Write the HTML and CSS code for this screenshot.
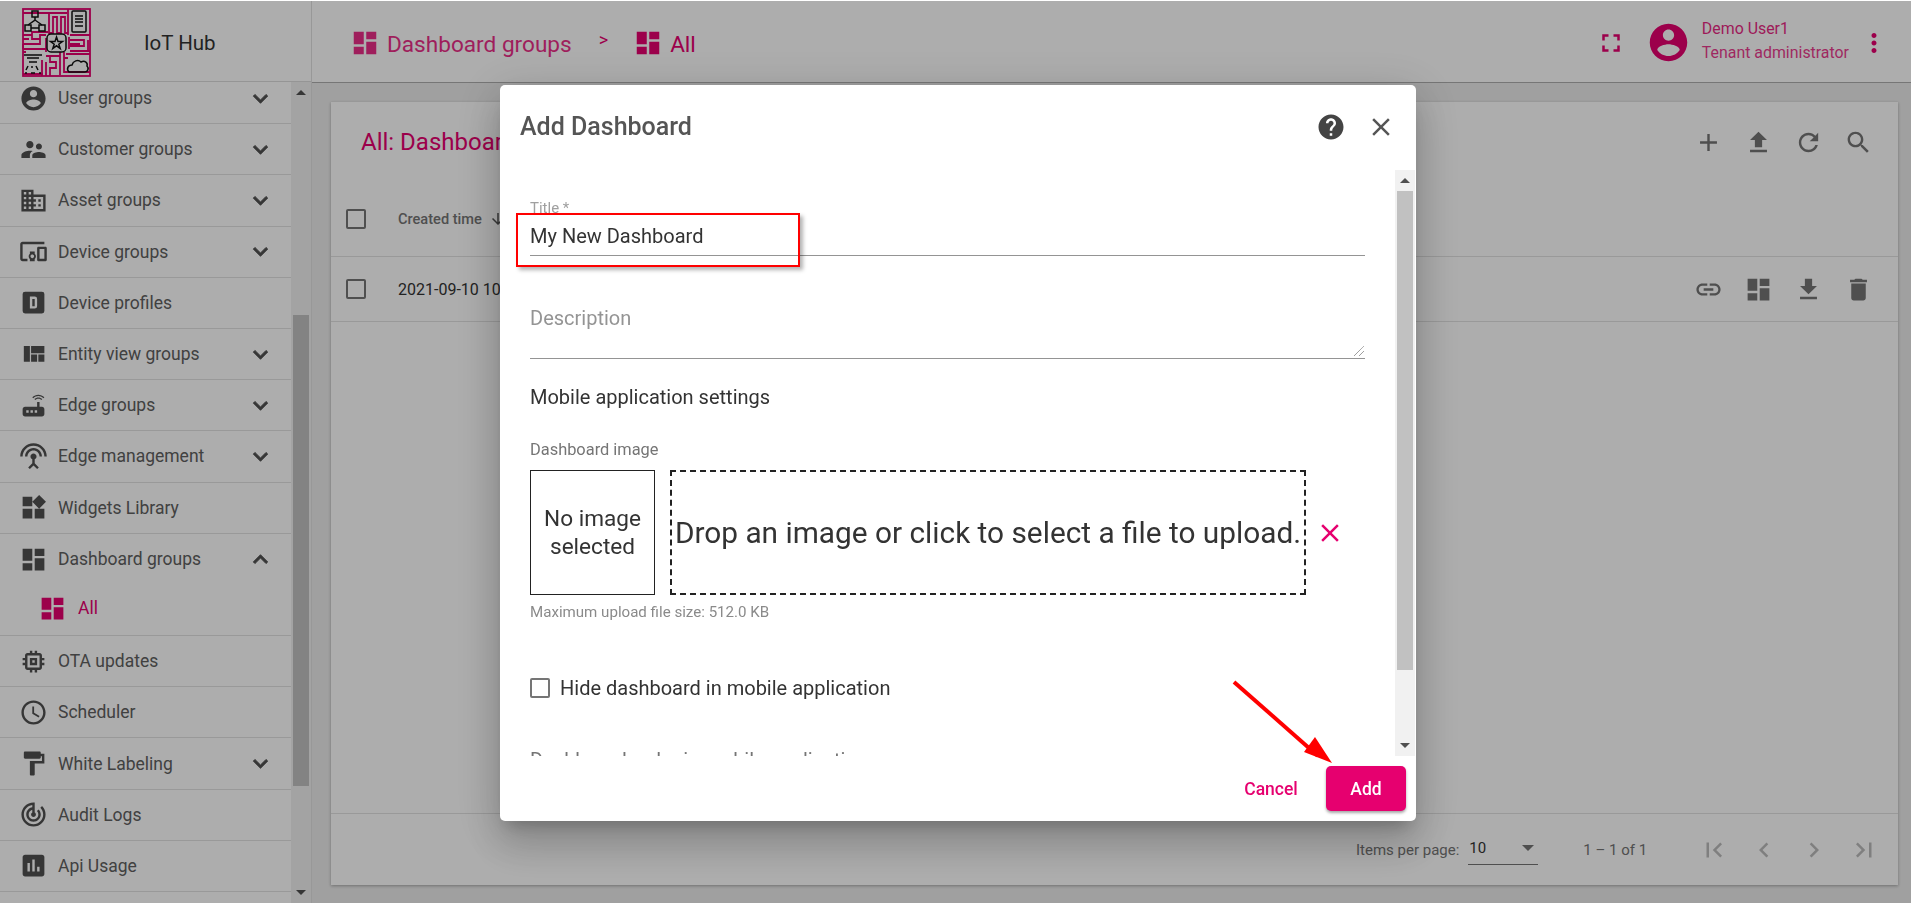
FILE: index.html
```html
<!DOCTYPE html>
<html lang="en">
<head>
    <meta charset="UTF-8">
    <title>IoT Hub - Add Dashboard</title>
    <link rel="stylesheet" href="styles.css">
</head>
<body>

<svg class="sprite" xmlns="http://www.w3.org/2000/svg">
    <symbol id="i-user" viewBox="0 0 24 24"><path d="M12 2C6.48 2 2 6.48 2 12s4.48 10 10 10 10-4.48 10-10S17.52 2 12 2zm0 3c1.66 0 3 1.34 3 3s-1.34 3-3 3-3-1.34-3-3 1.34-3 3-3zm0 14.2c-2.5 0-4.71-1.28-6-3.22.03-1.99 4-3.08 6-3.08 1.99 0 5.97 1.09 6 3.08-1.29 1.94-3.5 3.22-6 3.22z"/></symbol>
    <symbol id="i-customers" viewBox="0 0 24 24"><path d="M16.5 12c1.38 0 2.49-1.12 2.49-2.5S17.88 7 16.5 7C15.12 7 14 8.12 14 9.5s1.12 2.5 2.5 2.5zM9 11c1.66 0 2.99-1.34 2.99-3S10.66 5 9 5C7.34 5 6 6.34 6 8s1.34 3 3 3zm7.5 3c-1.83 0-5.5.92-5.5 2.75V19h11v-2.25c0-1.83-3.67-2.75-5.5-2.75zM9 13c-2.33 0-7 1.17-7 3.5V19h7v-2.25c0-.85.33-2.34 2.37-3.47C10.5 13.1 9.66 13 9 13z"/></symbol>
    <symbol id="i-domain" viewBox="0 0 24 24"><path d="M12 7V3H2v18h20V7H12zM6 19H4v-2h2v2zm0-4H4v-2h2v2zm0-4H4V9h2v2zm0-4H4V5h2v2zm4 12H8v-2h2v2zm0-4H8v-2h2v2zm0-4H8V9h2v2zm0-4H8V5h2v2zm10 12h-8v-2h2v-2h-2v-2h2v-2h-2V9h8v10zm-2-8h-2v2h2v-2zm0 4h-2v2h2v-2z"/></symbol>
    <symbol id="i-devices" viewBox="0 0 24 24"><path d="M3 6h18V4H3c-1.1 0-2 .9-2 2v12c0 1.1.9 2 2 2h4v-2H3V6zm10 6H9v1.78c-.61.55-1 1.33-1 2.22s.39 1.67 1 2.22V20h4v-1.78c.61-.55 1-1.34 1-2.22s-.39-1.67-1-2.22V12zm-2 5.5c-.83 0-1.5-.67-1.5-1.5s.67-1.5 1.5-1.5 1.5.67 1.5 1.5-.67 1.5-1.5 1.5zM22 8h-6c-.5 0-1 .5-1 1v10c0 .5.5 1 1 1h6c.5 0 1-.5 1-1V9c0-.5-.5-1-1-1zm-1 10h-4v-8h4v8z"/></symbol>
    <symbol id="i-profile" viewBox="0 0 24 24"><path fill-rule="evenodd" d="M9 7V17H13A2 2 0 0 0 15 15V9A2 2 0 0 0 13 7H9M5 3H19A2 2 0 0 1 21 5V19A2 2 0 0 1 19 21H5A2 2 0 0 1 3 19V5A2 2 0 0 1 5 3M11 9H13V15H11V9Z"/></symbol>
    <symbol id="i-quilt" viewBox="0 0 24 24"><path d="M10 18h5v-6h-5v6zm-6 0h5V5H4v13zm12 0h5v-6h-5v6zM10 5v6h11V5H10z"/></symbol>
    <symbol id="i-router" viewBox="0 0 24 24"><path d="M20.2 5.9l.8-.8C19.6 3.7 17.8 3 16 3s-3.6.7-5 2.1l.8.8C13 4.8 14.5 4.2 16 4.2s3 .6 4.2 1.7zm-.9.8c-.9-.9-2.1-1.4-3.3-1.4s-2.4.5-3.3 1.4l.8.8c.7-.7 1.6-1 2.5-1 .9 0 1.8.3 2.5 1l.8-.8zM19 13h-2V9h-2v4H5c-1.1 0-2 .9-2 2v4c0 1.1.9 2 2 2h14c1.1 0 2-.9 2-2v-4c0-1.1-.9-2-2-2zM8 18H6v-2h2v2zm3.5 0h-2v-2h2v2zm3.5 0h-2v-2h2v2z"/></symbol>
    <symbol id="i-antenna" viewBox="0 0 24 24"><path d="M12 5c-3.87 0-7 3.13-7 7h2c0-2.76 2.24-5 5-5s5 2.24 5 5h2c0-3.87-3.13-7-7-7zm1 9.29c.88-.39 1.5-1.26 1.5-2.29 0-1.38-1.12-2.5-2.5-2.5S9.5 10.62 9.5 12c0 1.02.62 1.9 1.5 2.29v3.3L7.59 21 9 22.41l3-3 3 3L16.41 21 13 17.59v-3.3zM12 1C5.93 1 1 5.93 1 12h2c0-4.97 4.03-9 9-9s9 4.03 9 9h2c0-6.07-4.93-11-11-11z"/></symbol>
    <symbol id="i-widgets" viewBox="0 0 24 24"><path d="M13 13v8h8v-8h-8zM3 21h8v-8H3v8zM3 3v8h8V3H3zm13.66-1.31L11 7.34 16.66 13l5.66-5.66-5.66-5.65z"/></symbol>
    <symbol id="i-dashboard" viewBox="0 0 24 24"><path d="M3 13h8V3H3v10zm0 8h8v-6H3v6zm10 0h8V11h-8v10zm0-18v6h8V3h-8z"/></symbol>
    <symbol id="i-memory" viewBox="0 0 24 24"><path d="M15 9H9v6h6V9zm-2 4h-2v-2h2v2zm8-2V9h-2V7c0-1.1-.9-2-2-2h-2V3h-2v2h-2V3H9v2H7c-1.1 0-2 .9-2 2v2H3v2h2v2H3v2h2v2c0 1.1.9 2 2 2h2v2h2v-2h2v2h2v-2h2c1.1 0 2-.9 2-2v-2h2v-2h-2v-2h2zm-4 6H7V7h10v10z"/></symbol>
    <symbol id="i-schedule" viewBox="0 0 24 24"><path d="M11.99 2C6.47 2 2 6.48 2 12s4.47 10 9.99 10C17.52 22 22 17.52 22 12S17.52 2 11.99 2zM12 20c-4.42 0-8-3.58-8-8s3.58-8 8-8 8 3.58 8 8-3.58 8-8 8zm.5-13H11v6l5.25 3.15.75-1.23-4.5-2.67z"/></symbol>
    <symbol id="i-paint" viewBox="0 0 24 24"><path d="M18 4V3c0-.55-.45-1-1-1H5c-.55 0-1 .45-1 1v4c0 .55.45 1 1 1h12c.55 0 1-.45 1-1V6h1v4H9v11c0 .55.45 1 1 1h2c.55 0 1-.45 1-1v-9h8V4h-3z"/></symbol>
    <symbol id="i-track" viewBox="0 0 24 24"><path d="M19.07 4.93l-1.41 1.41C19.1 7.79 20 9.79 20 12c0 4.42-3.58 8-8 8s-8-3.58-8-8c0-4.08 3.05-7.44 7-7.93v2.02C8.16 6.57 6 9.03 6 12c0 3.31 2.69 6 6 6s6-2.69 6-6c0-1.66-.67-3.16-1.76-4.24l-1.41 1.41C15.55 9.9 16 10.9 16 12c0 2.21-1.79 4-4 4s-4-1.79-4-4c0-1.86 1.28-3.41 3-3.86v2.14c-.6.35-1 .98-1 1.72 0 1.1.9 2 2 2s2-.9 2-2c0-.74-.4-1.38-1-1.72V2h-1C6.48 2 2 6.48 2 12s4.48 10 10 10 10-4.48 10-10c0-2.76-1.12-5.26-2.93-7.07z"/></symbol>
    <symbol id="i-chart" viewBox="0 0 24 24"><path d="M19 3H5c-1.1 0-2 .9-2 2v14c0 1.1.9 2 2 2h14c1.1 0 2-.9 2-2V5c0-1.1-.9-2-2-2zM9 17H7v-7h2v7zm4 0h-2V7h2v10zm4 0h-2v-4h2v4z"/></symbol>
    <symbol id="i-more" viewBox="0 0 24 24"><path d="M16.59 8.59L12 13.17 7.41 8.59 6 10l6 6 6-6z" stroke="currentColor" stroke-width=".7"/></symbol>
    <symbol id="i-less" viewBox="0 0 24 24"><path d="M12 8l-6 6 1.41 1.41L12 10.83l4.59 4.58L18 14z" stroke="currentColor" stroke-width=".7"/></symbol>
    <symbol id="i-fullscreen" viewBox="0 0 24 24"><path d="M7 14H5v5h5v-2H7v-3zm-2-4h2V7h3V5H5v5zm12 7h-3v2h5v-5h-2v3zM14 5v2h3v3h2V5h-5z"/></symbol>
    <symbol id="i-vert" viewBox="0 0 24 24"><path d="M12 8c1.1 0 2-.9 2-2s-.9-2-2-2-2 .9-2 2 .9 2 2 2zm0 2c-1.1 0-2 .9-2 2s.9 2 2 2 2-.9 2-2-.9-2-2-2zm0 6c-1.1 0-2 .9-2 2s.9 2 2 2 2-.9 2-2-.9-2-2-2z"/></symbol>
    <symbol id="i-help" viewBox="0 0 24 24"><path d="M12 2C6.48 2 2 6.48 2 12s4.48 10 10 10 10-4.48 10-10S17.52 2 12 2zm1 17h-2v-2h2v2zm2.07-7.75l-.9.92C13.45 12.9 13 13.5 13 15h-2v-.5c0-1.1.45-2.1 1.17-2.83l1.24-1.26c.37-.36.59-.86.59-1.41 0-1.1-.9-2-2-2s-2 .9-2 2H8c0-2.21 1.79-4 4-4s4 1.79 4 4c0 .88-.36 1.68-.93 2.25z"/></symbol>
    <symbol id="i-close" viewBox="0 0 24 24"><path d="M19 6.41L17.59 5 12 10.59 6.41 5 5 6.41 10.59 12 5 17.59 6.41 19 12 13.41 17.59 19 19 17.59 13.41 12z"/></symbol>
    <symbol id="i-add" viewBox="0 0 24 24"><path d="M19 13h-6v6h-2v-6H5v-2h6V5h2v6h6v2z"/></symbol>
    <symbol id="i-upload" viewBox="0 0 24 24"><path d="M9 16h6v-6h4l-7-7-7 7h4zm-4 2h14v2H5z"/></symbol>
    <symbol id="i-download" viewBox="0 0 24 24"><path d="M19 9h-4V3H9v6H5l7 7 7-7zM5 18v2h14v-2H5z"/></symbol>
    <symbol id="i-refresh" viewBox="0 0 24 24"><path d="M17.65 6.35C16.2 4.9 14.21 4 12 4c-4.42 0-7.99 3.58-7.99 8s3.57 8 7.99 8c3.73 0 6.84-2.55 7.73-6h-2.08c-.82 2.33-3.04 4-5.65 4-3.31 0-6-2.69-6-6s2.69-6 6-6c1.66 0 3.14.69 4.22 1.78L13 11h7V4l-2.35 2.35z"/></symbol>
    <symbol id="i-search" viewBox="0 0 24 24"><path d="M15.5 14h-.79l-.28-.27C15.41 12.59 16 11.11 16 9.5 16 5.91 13.09 3 9.5 3S3 5.91 3 9.5 5.91 16 9.5 16c1.61 0 3.09-.59 4.23-1.57l.27.28v.79l5 4.99L20.49 19l-4.99-5zm-6 0C7.01 14 5 11.99 5 9.5S7.01 5 9.5 5 14 7.01 14 9.5 11.99 14 9.5 14z"/></symbol>
    <symbol id="i-link" viewBox="0 0 24 24"><path d="M3.9 12c0-1.71 1.39-3.1 3.1-3.1h4V7H7c-2.76 0-5 2.24-5 5s2.24 5 5 5h4v-1.9H7c-1.71 0-3.1-1.39-3.1-3.1zM8 13h8v-2H8v2zm9-6h-4v1.9h4c1.71 0 3.1 1.39 3.1 3.1s-1.39 3.1-3.1 3.1h-4V17h4c2.76 0 5-2.24 5-5s-2.24-5-5-5z"/></symbol>
    <symbol id="i-delete" viewBox="0 0 24 24"><path d="M6 19c0 1.1.9 2 2 2h8c1.1 0 2-.9 2-2V7H6v12zM19 4h-3.5l-1-1h-5l-1 1H5v2h14V4z"/></symbol>
    <symbol id="i-first" viewBox="0 0 24 24"><path d="M18.41 16.59L13.82 12l4.59-4.59L17 6l-6 6 6 6zM6 6h2v12H6z"/></symbol>
    <symbol id="i-prev" viewBox="0 0 24 24"><path d="M15.41 7.41L14 6l-6 6 6 6 1.41-1.41L10.83 12z"/></symbol>
    <symbol id="i-next" viewBox="0 0 24 24"><path d="M10 6L8.59 7.41 13.17 12l-4.58 4.59L10 18l6-6z"/></symbol>
    <symbol id="i-last" viewBox="0 0 24 24"><path d="M5.59 7.41L10.18 12l-4.59 4.59L7 18l6-6-6-6zM16 6h2v12h-2z"/></symbol>
    <symbol id="i-down" viewBox="0 0 24 24"><path d="M20 12l-1.41-1.41L13 16.17V4h-2v12.17l-5.58-5.59L4 12l8 8 8-8z"/></symbol>
</svg>

<div class="app">
    <aside class="sidebar">
        <div class="brand">
            <svg class="logo" viewBox="0 0 69 69">
                <rect width="69" height="69" fill="#fff"/>
                <g fill="none" stroke="#e6006f" stroke-width="1.8">
                    <rect x="1" y="1" width="67" height="67"/>
                    <path d="M1 5h44M27 5v20h4V9h4v16h4V9h4v16h3M46 1v26M1 27h9v4h8v5H1M1 31h6M24 27h-6v9M1 41h23v3M1 36v5M24 30v14M10 27v-3h16"/>
                    <path d="M48 27h20M48 32h14v6H48M48 36h10M48 43h20M66 32v11M44 46h24M24 48h14v19M28 48v6h6v6h-6v8M42 50h4M42 46v18h5M20 52v16M24 54v14M46 64h22M1 44h3M1 66h20M47 29v12M38 44v4M42 44v2"/>
                </g>
                <g fill="none" stroke="#111" stroke-width="1.500">
                    <rect x="10" y="3" width="6" height="6"/><rect x="3" y="17" width="6" height="6"/><rect x="17" y="17" width="6" height="6"/>
                    <path d="M13 9v3l-7 5M13 12l7 5M9 20h8"/>
                    <rect x="50" y="3" width="14" height="21" rx="1"/>
                    <path d="M53 8h8M53 11h8M53 14h8M53 18h8"/>
                    <rect x="25" y="26" width="19" height="18" rx="4"/>
                    <path d="M34.500 29l1.500 4.500h4.500l-3.700 2.700 1.400 4.300-3.700-2.700-3.700 2.700 1.400-4.300-3.700-2.700h4.500z"/>
                    <path d="M47 64c-3-3-1-7 3-7 1-4 6-6 9-3 4-2 7 1 6 4 2 2 1 6-2 6z"/>
                    <path d="M2 47h18M5 50h12M7 54h8M10 58v2M6 58l-2 4M14 58l2 4M3 65h2M9 65h4M17 65h2" />
                </g>
            </svg>
            <div class="brand-name">IoT Hub</div>
        </div>
        <div class="side-scroll">
            <nav class="nav-list">
                <div class="nav-item"><svg class="ico"><use href="#i-user"/></svg><span class="nav-label">User groups</span><svg class="chev"><use href="#i-more"/></svg></div>
                <div class="nav-item"><svg class="ico"><use href="#i-customers"/></svg><span class="nav-label">Customer groups</span><svg class="chev"><use href="#i-more"/></svg></div>
                <div class="nav-item"><svg class="ico"><use href="#i-domain"/></svg><span class="nav-label">Asset groups</span><svg class="chev"><use href="#i-more"/></svg></div>
                <div class="nav-item"><svg class="ico"><use href="#i-devices"/></svg><span class="nav-label">Device groups</span><svg class="chev"><use href="#i-more"/></svg></div>
                <div class="nav-item"><svg class="ico"><use href="#i-profile"/></svg><span class="nav-label">Device profiles</span></div>
                <div class="nav-item"><svg class="ico"><use href="#i-quilt"/></svg><span class="nav-label">Entity view groups</span><svg class="chev"><use href="#i-more"/></svg></div>
                <div class="nav-item"><svg class="ico"><use href="#i-router"/></svg><span class="nav-label">Edge groups</span><svg class="chev"><use href="#i-more"/></svg></div>
                <div class="nav-item"><svg class="ico"><use href="#i-antenna"/></svg><span class="nav-label">Edge management</span><svg class="chev"><use href="#i-more"/></svg></div>
                <div class="nav-item"><svg class="ico"><use href="#i-widgets"/></svg><span class="nav-label">Widgets Library</span></div>
                <div class="nav-item no-line"><svg class="ico"><use href="#i-dashboard"/></svg><span class="nav-label">Dashboard groups</span><svg class="chev"><use href="#i-less"/></svg></div>
                <div class="nav-item nav-child"><svg class="ico"><use href="#i-dashboard"/></svg><span class="nav-label">All</span></div>
                <div class="nav-item"><svg class="ico"><use href="#i-memory"/></svg><span class="nav-label">OTA updates</span></div>
                <div class="nav-item"><svg class="ico"><use href="#i-schedule"/></svg><span class="nav-label">Scheduler</span></div>
                <div class="nav-item"><svg class="ico"><use href="#i-paint"/></svg><span class="nav-label">White Labeling</span><svg class="chev"><use href="#i-more"/></svg></div>
                <div class="nav-item"><svg class="ico"><use href="#i-track"/></svg><span class="nav-label">Audit Logs</span></div>
                <div class="nav-item"><svg class="ico"><use href="#i-chart"/></svg><span class="nav-label">Api Usage</span></div>
            </nav>
            <div class="scrollbar side-bar">
                <div class="arrow-up"></div>
                <div class="track"><div class="thumb"></div></div>
                <div class="arrow-down"></div>
            </div>
        </div>
    </aside>

    <div class="main">
        <header class="toolbar">
            <svg class="crumb-ico faded"><use href="#i-dashboard"/></svg>
            <span class="crumb faded">Dashboard groups</span>
            <span class="crumb-sep">&gt;</span>
            <svg class="crumb-ico"><use href="#i-dashboard"/></svg>
            <span class="crumb">All</span>
            <div class="toolbar-right">
                <svg class="tool-fs"><use href="#i-fullscreen"/></svg>
                <svg class="avatar"><use href="#i-user"/></svg>
                <div class="user-info">
                    <div>Demo User1</div>
                    <div class="user-role">Tenant administrator</div>
                </div>
                <svg class="tool-more"><use href="#i-vert"/></svg>
            </div>
        </header>
        <main class="content">
            <section class="card">
                <div class="card-head">
                    <div class="card-title">All: Dashboards</div>
                    <div class="action-icons">
                        <svg class="act"><use href="#i-add"/></svg>
                        <svg class="act"><use href="#i-upload"/></svg>
                        <svg class="act"><use href="#i-refresh"/></svg>
                        <svg class="act"><use href="#i-search"/></svg>
                    </div>
                </div>
                <div class="table-head">
                    <span class="check"></span>
                    <span class="col-time">Created time</span>
                    <svg class="sort"><use href="#i-down"/></svg>
                </div>
                <div class="table-row">
                    <span class="check"></span>
                    <span class="cell-time">2021-09-10 10:15:42</span>
                    <div class="action-icons">
                        <svg class="act"><use href="#i-link"/></svg>
                        <svg class="act"><use href="#i-dashboard"/></svg>
                        <svg class="act"><use href="#i-download"/></svg>
                        <svg class="act"><use href="#i-delete"/></svg>
                    </div>
                </div>
                <div class="table-fill"></div>
                <div class="paginator">
                    <span class="page-label">Items per page:</span>
                    <div class="page-select"><span>10</span><i class="caret"></i></div>
                    <span class="page-range">1 – 1 of 1</span>
                    <div class="page-btns">
                        <svg class="pg"><use href="#i-first"/></svg>
                        <svg class="pg"><use href="#i-prev"/></svg>
                        <svg class="pg"><use href="#i-next"/></svg>
                        <svg class="pg"><use href="#i-last"/></svg>
                    </div>
                </div>
            </section>
        </main>
    </div>
</div>

<div class="backdrop">
    <div class="dialog">
        <div class="dialog-head">
            <h2 class="dialog-title">Add Dashboard</h2>
            <svg class="dlg-help"><use href="#i-help"/></svg>
            <svg class="dlg-close"><use href="#i-close"/></svg>
        </div>
        <div class="dialog-body">
            <div class="form">
                <div class="float-label">Title *</div>
                <div class="input-value">My New Dashboard</div>
                <div class="textarea">
                    <span>Description</span>
                    <svg class="resize" viewBox="0 0 10 10"><path d="M0 10L10 0M5 10L10 5"/></svg>
                </div>
                <div class="section-label">Mobile application settings</div>
                <div class="small-label">Dashboard image</div>
                <div class="image-row">
                    <div class="image-box">No image selected</div>
                    <div class="drop-zone">Drop an image or click to select a file to upload.</div>
                    <svg class="image-clear"><use href="#i-close"/></svg>
                </div>
                <div class="hint">Maximum upload file size: 512.0 KB</div>
                <label class="check-row"><span class="check"></span>Hide dashboard in mobile application</label>
                <div class="cut-label">Dashboard order in mobile application</div>
            </div>
            <div class="scrollbar dlg-bar">
                <div class="arrow-up"></div>
                <div class="track"><div class="thumb"></div></div>
                <div class="arrow-down"></div>
            </div>
        </div>
        <div class="dialog-actions">
            <button class="btn-cancel">Cancel</button>
            <button class="btn-add">Add</button>
        </div>

        <!-- red marks drawn on top of the screenshot -->
        <div class="mark-box"></div>
        <svg class="mark-arrow" viewBox="0 0 110 95">
            <path d="M6 6L92 77" transform="rotate(1.800 6 6)" stroke="#f00" stroke-width="4" fill="none"/>
            <path d="M104 87L87 61L76 76z" fill="#f00"/>
        </svg>
    </div>
</div>

</body>
</html>
```

FILE: styles.css
```css
* {
    box-sizing: border-box;
}
html, body {
    margin: 0;
    height: 100%;
    overflow: hidden;
}
body {
    font-family: "Roboto", "Liberation Sans", sans-serif;
    background: #fff;
    padding-top: 1px;
}
.sprite {
    display: none;
}
svg {
    fill: currentColor;
    flex: none;
}

.app {
    display: flex;
    height: 902px;
}

/* sidebar */
.sidebar {
    width: 312px;
    flex: none;
    display: flex;
    flex-direction: column;
    background: #fff;
    border-right: 1px solid #e0e0e0;
}
.brand {
    height: 81px;
    flex: none;
    display: flex;
    align-items: center;
    padding: 2px 0 0 22px;
    border-bottom: 1px solid #dcdcdc;
}
.logo {
    width: 69px;
    height: 69px;
}
.brand-name {
    margin: 1px 0 0 53px;
    font-size: 20.500px;
    color: #333;
}
.side-scroll {
    flex: 1;
    display: flex;
    min-height: 0;
}
.nav-list {
    flex: 1;
    min-width: 0;
    height: 100%;
    overflow: hidden;
}
.nav-item {
    height: 51.2px;
    display: flex;
    align-items: center;
    padding: 0 16px 0 19px;
    border-bottom: 1px solid #e2e2e2;
    color: #606060;
}
.nav-item:first-child {
    margin-top: -9px;
}
.no-line {
    border-bottom: none;
}
.ico {
    width: 29px;
    height: 29px;
    color: #505050;
}
.nav-label {
    flex: 1;
    margin-left: 10px;
    font-size: 17.500px;
}
.chev {
    width: 29px;
    height: 29px;
    color: #505050;
}
.nav-child {
    padding-left: 38px;
    padding-bottom: 3px;
    color: #e6006f;
}
.nav-child .ico {
    color: #e6006f;
}
.nav-child .nav-label {
    margin-left: 11px;
}

/* scrollbars */
.scrollbar {
    width: 20px;
    flex: none;
    display: flex;
    flex-direction: column;
    align-items: center;
    background: #f1f1f1;
    height: 100%;
}
.track {
    flex: 1;
    width: 100%;
    min-height: 0;
    padding: 0 2px;
}
.thumb {
    background: #c1c1c1;
    width: 100%;
}
.arrow-up, .arrow-down {
    flex: none;
    width: 0;
    height: 0;
    margin: 8px 0;
    border-left: 5px solid transparent;
    border-right: 5px solid transparent;
}
.arrow-up {
    border-bottom: 5px solid #505050;
}
.arrow-down {
    border-top: 5px solid #505050;
}
.side-bar .track {
    padding-top: 212px;
}
.side-bar .thumb {
    height: 471px;
}
.dlg-bar .thumb {
    height: 479px;
}

/* top bar */
.main {
    flex: 1;
    min-width: 0;
    display: flex;
    flex-direction: column;
    background: #ececec;
}
.toolbar {
    height: 82px;
    flex: none;
    display: flex;
    align-items: center;
    padding: 2px 0 0 38px;
    background: #fff;
    border-bottom: 1px solid #aeaeae;
    color: #e6006f;
}
.crumb-ico {
    width: 30px;
    height: 30px;
}
.faded {
    opacity: .82;
}
.crumb {
    margin-left: 7px;
    padding-top: 3px;
    font-size: 22.600px;
}
.crumb-sep {
    margin: -6px 25px 0 27px;
    font-size: 18px;
}
.toolbar-right {
    margin-left: auto;
    display: flex;
    align-items: center;
    padding-right: 22px;
}
.tool-fs {
    width: 30px;
    height: 30px;
}
.avatar {
    width: 45px;
    height: 45px;
    margin-left: 20px;
}
.user-info {
    margin-left: 11px;
    padding-bottom: 4px;
    font-size: 15.900px;
    line-height: 24px;
    opacity: .85;
}
.user-role {
    opacity: .9;
}
.tool-more {
    width: 30px;
    height: 30px;
    margin-left: 10px;
}

/* dashboards card */
.content {
    flex: 1;
    min-height: 0;
    padding: 19px 13px 18px 19px;
}
.card {
    height: 100%;
    display: flex;
    flex-direction: column;
    background: #fff;
    box-shadow: 0 1px 3px rgba(0, 0, 0, .3);
}
.card-head {
    height: 100px;
    flex: none;
    display: flex;
    align-items: center;
    padding: 0 25px 20px 30px;
}
.card-title {
    font-size: 24px;
    color: #e6006f;
}
.action-icons {
    margin-left: auto;
    display: flex;
    gap: 21px;
    color: #757575;
}
.act {
    width: 29px;
    height: 29px;
}
.table-head, .table-row {
    flex: none;
    display: flex;
    align-items: center;
    padding-left: 15px;
    border-bottom: 1px solid #e2e2e2;
}
.table-head {
    height: 55px;
    padding-bottom: 20px;
}
.table-row {
    height: 65px;
    padding-right: 25px;
}
.check {
    width: 20px;
    height: 20px;
    flex: none;
    border: 2px solid #757575;
    border-radius: 2px;
}
.col-time {
    margin-left: 32px;
    font-size: 14.600px;
    font-weight: 500;
    color: #757575;
}
.sort {
    width: 18px;
    height: 18px;
    margin-left: 7px;
    color: #555;
}
.cell-time {
    margin-left: 32px;
    font-size: 16px;
    color: #333;
}
.table-fill {
    flex: 1;
    border-bottom: 1px solid #e2e2e2;
}
.paginator {
    height: 71px;
    flex: none;
    display: flex;
    align-items: center;
    padding: 0 19px 0 1025px;
    color: #757575;
    font-size: 15px;
}
.page-select {
    width: 70px;
    height: 30px;
    margin-left: 9px;
    display: flex;
    align-items: center;
    justify-content: space-between;
    padding: 0 4px 2px 1px;
    border-bottom: 1px solid #757575;
    color: #333;
}
.caret {
    width: 0;
    height: 0;
    border-left: 6px solid transparent;
    border-right: 6px solid transparent;
    border-top: 6px solid #757575;
}
.page-range {
    margin-left: 45px;
}
.page-btns {
    margin-left: auto;
    display: flex;
    gap: 20px;
    color: #bcbcbc;
}
.pg {
    width: 30px;
    height: 30px;
}

/* dialog */
.backdrop {
    position: fixed;
    inset: 1px 0 0 0;
    display: flex;
    align-items: flex-start;
    justify-content: flex-start;
    padding: 84px 0 0 500px;
    background: rgba(0, 0, 0, .32);
}
.dialog {
    position: relative;
    width: 916px;
    height: 736px;
    display: flex;
    flex-direction: column;
    background: #fff;
    border-radius: 5px;
    box-shadow: 0 11px 15px -7px rgba(0, 0, 0, .2), 0 24px 38px 3px rgba(0, 0, 0, .14), 0 9px 46px 8px rgba(0, 0, 0, .12);
}
.dialog-head {
    height: 85px;
    flex: none;
    display: flex;
    align-items: center;
    padding: 0 20px 2px 20px;
    color: #555;
}
.dialog-title {
    flex: 1;
    margin: 0;
    font-size: 25px;
    font-weight: 500;
    line-height: 1;
}
.dlg-help {
    width: 30px;
    height: 30px;
    color: #444;
}
.dlg-close {
    width: 30px;
    height: 30px;
    margin-left: 20px;
}
.dialog-body {
    flex: 1;
    min-height: 0;
    display: flex;
    padding-right: 1px;
}
.form {
    flex: 1;
    min-width: 0;
    height: 100%;
    overflow: hidden;
    padding: 30px 30px 0 30px;
    color: #333;
}
.float-label {
    font-size: 15px;
    line-height: 16px;
    color: #a0a0a0;
}
.input-value {
    margin-top: 8px;
    height: 32px;
    font-size: 20px;
    line-height: 24px;
    color: #333;
    border-bottom: 1px solid #949494;
}
.textarea {
    position: relative;
    margin-top: 50px;
    height: 53px;
    font-size: 20px;
    line-height: 24px;
    color: #949494;
    border-bottom: 1px solid #949494;
}
.resize {
    position: absolute;
    right: 1px;
    bottom: 2px;
    width: 10px;
    height: 10px;
    fill: none;
    stroke: #777;
    stroke-dasharray: 1 .5;
}
.section-label {
    margin-top: 26px;
    font-size: 20px;
    line-height: 24px;
}
.small-label {
    margin-top: 33px;
    font-size: 16.400px;
    line-height: 16px;
    color: #757575;
}
.image-row {
    margin-top: 12px;
    display: flex;
    align-items: center;
}
.image-box {
    width: 125px;
    height: 125px;
    display: flex;
    align-items: center;
    justify-content: center;
    text-align: center;
    padding: 0 8px;
    border: 1px solid #222;
    font-size: 22.600px;
    line-height: 28px;
}
.drop-zone {
    width: 636px;
    height: 125px;
    margin-left: 15px;
    display: flex;
    align-items: center;
    justify-content: center;
    border: 2px dashed #222;
    font-size: 29.800px;
    white-space: nowrap;
}
.image-clear {
    width: 30px;
    height: 30px;
    margin-left: 9px;
    color: #e6006f;
}
.hint {
    margin-top: 9px;
    font-size: 15.100px;
    line-height: 16px;
    color: #8a8a8a;
}
.check-row {
    margin-top: 56px;
    display: flex;
    align-items: center;
    gap: 10px;
    font-size: 20px;
    line-height: 24px;
}
.cut-label {
    margin-top: 48px;
    font-size: 20px;
    line-height: 24px;
    color: #757575;
}
.dialog-actions {
    height: 65px;
    flex: none;
    display: flex;
    align-items: flex-start;
    justify-content: flex-end;
    gap: 28px;
    padding: 10px 10px 0 0;
}
.btn-cancel, .btn-add {
    font: 500 17.500px "Roboto", sans-serif;
    border: none;
    height: 45px;
    padding: 0;
    border-radius: 5px;
}
.btn-cancel {
    width: 54px;
    background: none;
    color: #e6006f;
}
.btn-add {
    width: 80px;
    background: #e6006f;
    color: #fff;
    box-shadow: 0 2px 3px rgba(0, 0, 0, .35);
}

/* annotation marks */
.mark-box {
    position: absolute;
    left: 16px;
    top: 128px;
    width: 284px;
    height: 54px;
    border: 2px solid #f00;
    box-shadow: 3px 3px 4px rgba(0, 0, 0, .3);
}
.mark-arrow {
    position: absolute;
    left: 728px;
    top: 591px;
    width: 110px;
    height: 95px;
}
```
